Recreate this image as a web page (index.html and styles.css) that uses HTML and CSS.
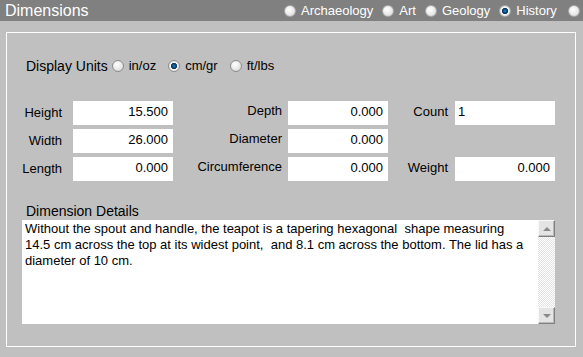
FILE: index.html
```html
<!DOCTYPE html>
<html>
<head>
<meta charset="utf-8">
<link rel="stylesheet" href="styles.css">
</head>
<body>
<div class="header">
  <div class="title">Dimensions</div>
  <div class="tabs">
    <span class="radio"></span><span class="tab-label">Archaeology</span>
    <span class="radio"></span><span class="tab-label">Art</span>
    <span class="radio"></span><span class="tab-label">Geology</span>
    <span class="radio on"></span><span class="tab-label last">History</span>
    <span class="radio"></span>
  </div>
</div>
<div class="panel">
  <div class="units">
    <span class="units-label">Display Units</span>
    <span class="radio"></span><span class="opt">in/oz</span>
    <span class="radio on"></span><span class="opt">cm/gr</span>
    <span class="radio"></span><span class="opt">ft/lbs</span>
  </div>
  <div class="fields">
    <div class="lbl">Height</div><div class="field">15.500</div>
    <div class="lbl">Depth</div><div class="field">0.000</div>
    <div class="lbl">Count</div><div class="field left">1</div>
    <div class="lbl">Width</div><div class="field">26.000</div>
    <div class="lbl">Diameter</div><div class="field">0.000</div>
    <div class="lbl"></div><div class="empty"></div>
    <div class="lbl">Length</div><div class="field">0.000</div>
    <div class="lbl">Circumference</div><div class="field">0.000</div>
    <div class="lbl">Weight</div><div class="field">0.000</div>
  </div>
  <div class="details-label">Dimension Details</div>
  <div class="details">
    <div class="details-text">Without the spout and handle, the teapot is a tapering hexagonal  shape measuring
14.5 cm across the top at its widest point,  and 8.1 cm across the bottom. The lid has a
diameter of 10 cm.</div>
    <div class="scrollbar">
      <div class="sb-btn"><span class="tri up"></span></div>
      <div class="sb-track"></div>
      <div class="sb-btn"><span class="tri down"></span></div>
    </div>
  </div>
</div>
</body>
</html>
```
FILE: styles.css
```css
html, body {
  margin: 0;
  padding: 0;
}
body {
  width: 583px;
  height: 357px;
  overflow: hidden;
  background: #c0c0c0;
  font-family: "Liberation Sans", Arial, sans-serif;
  color: #000;
}
.header {
  height: 21px;
  background: #808080;
  display: flex;
  align-items: center;
  overflow: hidden;
  white-space: nowrap;
}
.title {
  width: 279px;
  flex: none;
  padding-left: 5px;
  box-sizing: content-box;
  font-size: 16px;
  color: #fff;
  line-height: 20px;
}
.tabs {
  display: flex;
  align-items: center;
  flex: none;
}
.tab-label {
  color: #fff;
  font-size: 13px;
  line-height: 20px;
  margin-left: 5px;
  margin-right: 9px;
}
.tab-label.last {
  margin-right: 11px;
}
.radio {
  display: inline-block;
  flex: none;
  width: 12px;
  height: 12px;
  box-sizing: border-box;
  border-radius: 50%;
  border: 1px solid #8c8c8c;
  background: radial-gradient(circle at 40% 35%, #ffffff 0, #ececec 45%, #cfcfcf 100%);
}
.header .radio {
  border-color: #a8a8a8;
  background: radial-gradient(circle at 40% 35%, #ffffff 0, #eeeeee 45%, #d2d2d2 100%);
}
.radio.on,
.header .radio.on {
  background: radial-gradient(circle at 50% 50%, #2f86c8 0, #0b4f88 1.6px, #07355f 2.8px, #f6f6f6 3.4px, #dedede 6px);
}
.panel {
  margin: 11px 0 0 6px;
  width: 568px;
  height: 313px;
  border: 1px solid #fff;
}
.units {
  display: flex;
  align-items: center;
  margin-top: 25px;
  padding-left: 19px;
  height: 16px;
}
.units-label {
  font-size: 14px;
  line-height: 16px;
  margin-right: 4px;
}
.opt {
  font-size: 13px;
  line-height: 16px;
  margin-left: 5px;
  margin-right: 12px;
}
.fields {
  margin-top: 27px;
  display: grid;
  grid-template-columns: 66px 100px 115px 100px 67px 100px;
  grid-auto-rows: 24px;
  row-gap: 4px;
}
.lbl {
  font-size: 13px;
  line-height: 16px;
  padding-top: 4px;
  text-align: right;
  padding-right: 11px;
}
.lbl:nth-child(6n+3) {
  padding-right: 6px;
  padding-top: 2px;
}
.lbl:nth-child(6n+5) {
  padding-right: 7px;
  padding-top: 3px;
}
.field {
  background: #fff;
  font-size: 13px;
  line-height: 16px;
  padding: 3px 5px 0 3px;
  text-align: right;
}
.field.left {
  text-align: left;
}
.details-label {
  margin-top: 22px;
  padding-left: 19px;
  font-size: 14px;
  line-height: 16px;
}
.details {
  margin: 1px 0 0 15px;
  width: 533px;
  height: 104px;
  background: #fff;
  display: flex;
}
.details-text {
  flex: 1;
  padding: 1px 0 0 3px;
  font-size: 13px;
  line-height: 16px;
  white-space: pre;
  overflow: hidden;
}
.scrollbar {
  width: 17px;
  flex: none;
  display: flex;
  flex-direction: column;
}
.sb-track {
  flex: 1;
  background: repeating-conic-gradient(#ffffff 0 25%, #e2e2e2 0 50%) 0 0 / 2px 2px;
}
.sb-btn {
  height: 17px;
  box-sizing: border-box;
  background: #e4e4e4;
  border-top: 1px solid #f8f8f8;
  border-left: 1px solid #f8f8f8;
  border-right: 1px solid #808080;
  border-bottom: 1px solid #808080;
  box-shadow: inset -1px -1px 0 #b8b8b8;
  display: flex;
  align-items: center;
  justify-content: center;
}
.tri {
  width: 0;
  height: 0;
  border-left: 4px solid transparent;
  border-right: 4px solid transparent;
}
.tri.up {
  border-bottom: 4px solid #8a8a8a;
}
.tri.down {
  border-top: 4px solid #8a8a8a;
}
```
